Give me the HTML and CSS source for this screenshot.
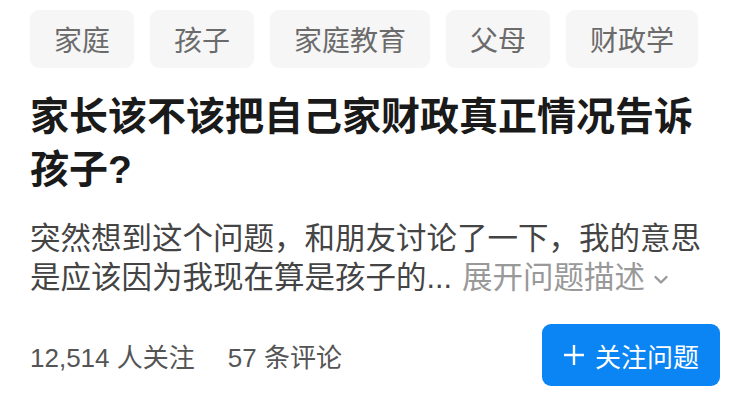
FILE: index.html
```html
<!DOCTYPE html>
<html lang="zh-CN">

<head>
    <meta charset="UTF-8">
    <meta name="viewport" content="width=device-width, initial-scale=1.0">
    <title>家长该不该把自己家财政真正情况告诉孩子？</title>
    <link rel="stylesheet" href="styles.css">
</head>

<body>
    <main class="question">
        <div class="tags">
            <span class="tag">家庭</span>
            <span class="tag">孩子</span>
            <span class="tag">家庭教育</span>
            <span class="tag">父母</span>
            <span class="tag">财政学</span>
        </div>

        <h1 class="title">家长该不该把自己家财政真正情况告诉孩子?</h1>

        <p class="excerpt">突然想到这个问题，和朋友讨论了一下，我的意思是应该因为我现在算是孩子的...<span class="expand">展开问题描述<svg class="chevron" width="16" height="10" viewBox="0 0 16 10">
                    <path d="M2.5 2 L8 7.5 L13.5 2" fill="none" stroke="#9a9a9a" stroke-width="2.4" stroke-linecap="round" stroke-linejoin="round" />
                </svg></span></p>

        <div class="footer-row">
            <div class="stats">
                <span>12,514 人关注</span>
                <span>57 条评论</span>
            </div>
            <button class="follow-btn">
                <svg width="22" height="22" viewBox="0 0 22 22">
                    <path d="M11 1 V21 M1 11 H21" stroke="#fff" stroke-width="2.4" />
                </svg>
                关注问题
            </button>
        </div>
    </main>
</body>

</html>
```

FILE: styles.css
```css
/* Reset */
* {
    margin: 0;
    padding: 0;
    box-sizing: border-box;
}

body {
    font-family: "Liberation Sans", "Noto Sans CJK SC", sans-serif;
    background: #fff;
    color: #1a1a1a;
}

.question {
    padding: 10px 30px 0 30px;
}

.tags {
    display: flex;
    gap: 16px;
}

.tag {
    height: 58px;
    padding: 0 24px;
    display: flex;
    align-items: center;
    background: #f6f6f6;
    border-radius: 9px;
    color: #6b6b6b;
    font-size: 28px;
}

.title {
    margin-top: 22px;
    font-size: 39px;
    line-height: 53px;
    font-weight: 700;
    color: #1a1a1a;
}

.excerpt {
    margin-top: 23px;
    font-size: 30.5px;
    line-height: 39px;
    color: #444;
}

.expand {
    display: inline-block;
    margin-left: 10px;
    color: #999;
}

.chevron {
    vertical-align: 3px;
    margin-left: 8px;
}

.footer-row {
    margin-top: 27px;
    display: flex;
    justify-content: space-between;
    align-items: center;
}

.stats {
    display: flex;
    gap: 33px;
    font-size: 26px;
    color: #555;
}

.follow-btn {
    height: 62px;
    width: 178px;
    display: flex;
    align-items: center;
    justify-content: center;
    gap: 10px;
    background: #0b84f4;
    color: #fff;
    border: none;
    border-radius: 9px;
    font-family: inherit;
    font-size: 26px;
}
```
